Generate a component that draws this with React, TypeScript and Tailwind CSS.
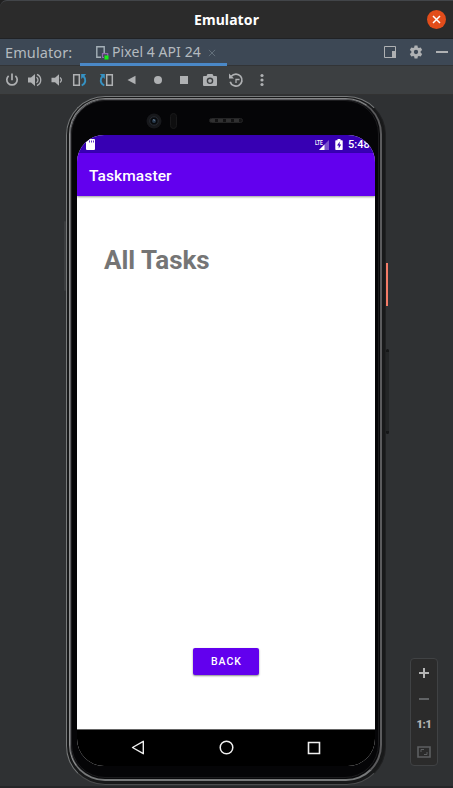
import React from "react";

const ui = "font-['Noto_Sans','Open_Sans',sans-serif]";
const roboto = "font-[Roboto,sans-serif]";

function TitleBar() {
  return (
    <header className="flex h-[38px] items-center justify-end rounded-tl-[7px] border-t border-[#424549] bg-[#2b2b2b] pr-[7px]">
      <h1 className={`${ui} mr-[167px] w-[67px] whitespace-nowrap text-center text-[14px] font-bold leading-5 tracking-[0.1px] text-white`}>Emulator</h1>
      <button aria-label="Close" className="h-[19px] w-[19px] rounded-full bg-[#e24d1b]">
        <svg viewBox="0 0 19 19" className="h-full w-full" stroke="white" strokeWidth="1.5"><path d="M6 6l7 7M13 6l-7 7" /></svg>
      </button>
    </header>
  );
}

function TabBar() {
  return (
    <div className="flex h-[27px] border-b border-[#323436] bg-[#3d4855] text-[#b4babf]">
      <span className={`${ui} w-[80px] pl-[5px] text-[14.5px] leading-[26px] tracking-[0.1px]`}>Emulator:</span>
      <div className="flex h-[27px] w-[147px] items-center border-b-[3px] border-[#4a88c7] pl-[15px]">
        <svg width="14" height="16" viewBox="0 0 14 16" fill="none" className="mt-[3px]">
          <path d="M6 12.2H1.8V1.8h7.4V8" stroke="#a5b0b8" strokeWidth="1.4" />
          <path d="M9 12.5H7.5V8.6h5.2V11" stroke="#9268ae" strokeWidth="1.2" />
          <rect x="9.5" y="10.5" width="4" height="4" fill="#18ed18" />
        </svg>
        <span className={`${ui} ml-[3px] mt-[2px] w-[96px] whitespace-nowrap text-[14px] leading-6 tracking-[0.07px]`}>Pixel 4 API 24</span>
        <svg width="8" height="8" viewBox="0 0 9 9" className="mt-[4px]" stroke="#68747f" strokeWidth="1"><path d="M1 1l7 7M8 1L1 8" /></svg>
      </div>
      <div className="ml-auto flex items-center gap-[13px] pr-[5px] pb-px">
        <svg width="12" height="12" viewBox="0 0 12 12" fill="none"><path d="M.5.5h11v11H.5z" stroke="#afb1b3" /><path d="M8 5h4v7H8z" fill="#afb1b3" /></svg>
        <svg width="14" height="14" viewBox="0 0 24 24" fill="#afb1b3"><path fillRule="evenodd" d="M9.5 1h5l.6 3.3 1.8 1 3.2-1.1 2.5 4.3-2.6 2.3v2.4l2.6 2.3-2.5 4.3-3.2-1.1-1.8 1-.6 3.3h-5l-.6-3.3-1.8-1-3.2 1.1-2.5-4.3L4 13.2v-2.4L1.4 8.5l2.5-4.3 3.2 1.1 1.8-1L9.5 1zM12 8.3a3.7 3.7 0 1 0 0 7.4 3.7 3.7 0 0 0 0-7.4z" /></svg>
        <span className="h-[2px] w-[12px] bg-[#afb1b3]" />
      </div>
    </div>
  );
}

function Tool({ width, children }: { width: string; children: React.ReactNode }) {
  return (
    <button className={`flex h-full items-center justify-center ${width}`}>
      <svg width="16" height="16" viewBox="0 0 16 16" fill="none" stroke="#afb1b3" strokeWidth="1.7">{children}</svg>
    </button>
  );
}

function Toolbar() {
  return (
    <div className="flex h-[29px] border-b border-[#323232] bg-[#3c3f41] pl-px">
      <Tool width="w-[22px]"><path d="M4.6 3.8a5.2 5.2 0 1 0 6.8 0M8 1.5v6.8" /></Tool>
      <Tool width="w-[23px]"><path d="M1 5.5h3L8 2v12L4 10.5H1z" fill="#afb1b3" stroke="none" /><path d="M9.5 5.3c2 1.6 2 3.8 0 5.4M10 2.4c5 2.3 5 8.9 0 11.2" strokeWidth="1.3" /></Tool>
      <Tool width="w-[21px]"><path d="M2.5 5.7H6L10 2.3v11.4l-4-3.4H2.5z" fill="#afb1b3" stroke="none" /><path d="M11 5.6c1.9 1.5 1.9 3.3 0 4.8" strokeWidth="1.3" /></Tool>
      <Tool width="w-[26px]"><path d="M1.7 2.7h5.6v10.6H1.7z" strokeWidth="1.5" /><path d="M9.7 13.5C14 11.5 14.3 7.3 11.4 4" stroke="#3592c4" strokeWidth="1.9" /><path d="M9.2 2h5l-5 5z" fill="#3592c4" stroke="none" /></Tool>
      <Tool width="w-[26px]"><path d="M8.7 2.7h5.6v10.6H8.7z" strokeWidth="1.5" /><path d="M6.3 13.5C2 11.5 1.7 7.3 4.6 4" stroke="#3592c4" strokeWidth="1.9" /><path d="M6.8 2h-5l5 5z" fill="#3592c4" stroke="none" /></Tool>
      <Tool width="w-[26px]"><path d="M3.5 8l8-4.2v8.4z" fill="#afb1b3" stroke="none" /></Tool>
      <Tool width="w-[26px]"><circle cx="8" cy="8" r="4" fill="#afb1b3" stroke="none" /></Tool>
      <Tool width="w-[26px]"><path d="M4 4h8v8H4z" fill="#afb1b3" stroke="none" /></Tool>
      <Tool width="w-[26px]"><path fillRule="evenodd" d="M5.5 2h5l1 2H14q1 0 1 1v8q0 1-1 1H2q-1 0-1-1V5q0-1 1-1h2.5l1-2zM8 5.5a3.3 3.3 0 1 0 0 6.6 3.3 3.3 0 0 0 0-6.6z" fill="#afb1b3" stroke="none" /><circle cx="8" cy="8.8" r="1.9" fill="#afb1b3" stroke="none" /></Tool>
      <Tool width="w-[26px]"><path d="M3.3 4.3a6 6 0 1 1-1.1 5.4" /><path d="M1 1.5v5h5z" fill="#afb1b3" stroke="none" /><path d="M8 11V7.5h3.5" strokeWidth="1.3" /></Tool>
      <Tool width="w-[26px]"><g fill="#afb1b3" stroke="none"><circle cx="8" cy="3.5" r="1.6" /><circle cx="8" cy="8" r="1.6" /><circle cx="8" cy="12.5" r="1.6" /></g></Tool>
    </div>
  );
}

function Screen() {
  return (
    <div className={`${roboto} flex h-[631px] w-[298px] flex-col overflow-hidden rounded-[27px] bg-white`}>
      <div className="flex h-[18px] shrink-0 items-center bg-[#3700b3] text-white">
        <svg width="9" height="11" viewBox="0 0 9 11" className="ml-[9px] mt-[1px]"><path d="M3 0h5q1 0 1 1v9q0 1-1 1H1q-1 0-1-1V3z" fill="white" /><path d="M3.5 1.5v2M5.5 1.5v2M7.5 1.5v2" stroke="#3700b3" strokeWidth=".8" /></svg>
        <div className="ml-auto flex w-[60px] items-center">
          <span className="h-[11px] w-[8px] origin-top-left scale-x-[0.72] whitespace-nowrap text-[7px] font-medium leading-[8px] tracking-[-0.2px]">LTE</span>
          <svg width="11" height="12" viewBox="0 0 11 12" className="-ml-[5px] mt-[1px]"><path d="M11 1v10H1z" fill="#7952cb" /><path d="M6.5 5.5V11H1z" fill="white" /></svg>
          <svg width="8" height="11" viewBox="0 0 8 11" className="ml-[6px] mt-[1px]"><path d="M2.5 0h3v1.3H7q.7 0 .7.7v8.3q0 .7-.7.7H1q-.7 0-.7-.7V2q0-.7.7-.7h1.5z" fill="white" /><path d="M4.8 2.5L2 6.5h1.7v3L6.2 5.4H4.5z" fill="#3700b3" /></svg>
          <span className="ml-[5px] mt-[2px] whitespace-nowrap text-[11px] font-medium leading-4">5:48</span>
        </div>
      </div>
      <div className="z-10 flex h-[43px] shrink-0 items-center bg-[#6200ee] pl-[12px] shadow-[0_1px_2px_#0006]">
        <h2 className="mt-[2px] text-[15.5px] font-medium leading-5 tracking-[0.1px] text-white">Taskmaster</h2>
      </div>
      <main className="flex flex-1 flex-col border-b border-[#666] bg-white">
        <h3 className="ml-[27px] mt-[48px] text-[26px] font-bold leading-[32px] text-[#757575]">All Tasks</h3>
        <button className="mx-auto mb-[54px] mt-auto h-[27px] w-[66px] rounded-[2px] bg-[#6200ee] pl-[1px] text-[10.5px] font-medium leading-[28px] tracking-[1px] text-white shadow-[0_1px_2px_#0007]">BACK</button>
      </main>
      <nav className="flex h-[36px] shrink-0 items-center justify-between bg-black pb-px pl-[54px] pr-[54px]">
        <svg width="14" height="15" viewBox="0 0 14 15" fill="none" stroke="#eee" strokeWidth="1.4" strokeLinejoin="round"><path d="M12.3 1.3v12.4L1.5 7.5z" /></svg>
        <svg width="15" height="15" viewBox="0 0 15 15" fill="none" stroke="#eee" strokeWidth="1.5"><circle cx="7.5" cy="7.5" r="6.3" /></svg>
        <svg width="14" height="14" viewBox="0 0 14 14" fill="none" stroke="#eee" strokeWidth="1.6"><path d="M1.5 1.5h11v11h-11z" /></svg>
      </nav>
    </div>
  );
}

function Phone() {
  return (
    <div className="relative ml-[66px] mt-[1px] h-[689px] w-[322px] shrink-0">
      <div className="h-full w-[320px] rounded-[39px] border border-b-[#4b4c4d] border-l-[#77797a] border-r-[#202122] border-t-[#77797a] bg-[#18191a] pb-[3px] pl-[2px] pr-[3px] pt-[1px]">
        <div className="h-full rounded-[36px] border border-b-2 border-r-2 border-b-[#77797a] border-l-[#929394] border-r-[#5b5b5d] border-t-[#858687] bg-[#09090b] p-[1px] shadow-[inset_1px_1px_1px_#66676a]">
          <div className="flex h-full flex-col rounded-[34px] border border-[#1b1b1d] bg-[#050507] pl-[5px] pt-[34px]">
            <Screen />
          </div>
        </div>
      </div>
      <div className="absolute left-[80px] top-[17px] flex items-center">
        <svg width="16" height="16" viewBox="0 0 16 16"><circle cx="8" cy="8" r="7.5" fill="#17181b" /><circle cx="8" cy="8" r="4.2" fill="#07090c" stroke="#292d33" /><circle cx="8" cy="8" r="2" fill="#26384b" /><path d="M7 6l2 1-1 1z" fill="#889bb2" /></svg>
        <span className="ml-[8px] h-[16px] w-[7px] rounded-full border border-[#19191a] bg-[#0e0e0f]" />
      </div>
      <span className="absolute left-[143px] top-[22px] h-[5px] w-[34px] rounded-full border border-[#252526] bg-[repeating-linear-gradient(90deg,#303031_0_5px,#131314_5px_8px)]" />
      <span className="absolute -left-[2px] top-[125px] h-[70px] w-[2px] rounded bg-[#3b3d3f]" />
      <span className="absolute left-[320px] top-[167px] h-[43px] w-[2px] bg-[#f47b67]" />
      <span className="absolute left-[320px] top-[253px] h-[85px] w-[3px] rounded border-y-[3px] border-[#151617] bg-[#242627]" />
    </div>
  );
}

function ZoomPanel() {
  return (
    <aside className="mr-[15px] mt-[563px] flex h-[108px] w-[28px] flex-col items-center rounded-[4px] border border-[#404244] bg-[#2b2b2b]">
      <button className="flex h-[28px] items-center" aria-label="Zoom in"><svg width="10" height="10" stroke="#b5b5b5" strokeWidth="2"><path d="M5 0v10M0 5h10" /></svg></button>
      <button className="flex h-[24px] items-center" aria-label="Zoom out"><span className="h-[2px] w-[10px] bg-[#616365]" /></button>
      <button className={`${roboto} flex h-[28px] items-center text-[11px] font-black leading-3 tracking-[-0.4px] text-[#b5b5b5]`}>1:1</button>
      <button className="flex h-[25px] items-center" aria-label="Fit"><svg width="14" height="12" viewBox="0 0 14 12" fill="none" stroke="#5d5f61"><path d="M1 1h12v10H1z" strokeWidth="1.6" /><path d="M4 6V3.5h3M7 8.5h3V6" /></svg></button>
    </aside>
  );
}

export default function App() {
  return (
    <div className="flex h-[788px] w-[453px] flex-col overflow-hidden bg-[#202020]">
      <TitleBar />
      <div className="h-px shrink-0 bg-[#202225]" />
      <TabBar />
      <Toolbar />
      <div className="flex h-[693px] shrink-0 items-start justify-between border-b-2 border-[#252628] bg-[#2f3133]">
        <Phone />
        <ZoomPanel />
      </div>
    </div>
  );
}
